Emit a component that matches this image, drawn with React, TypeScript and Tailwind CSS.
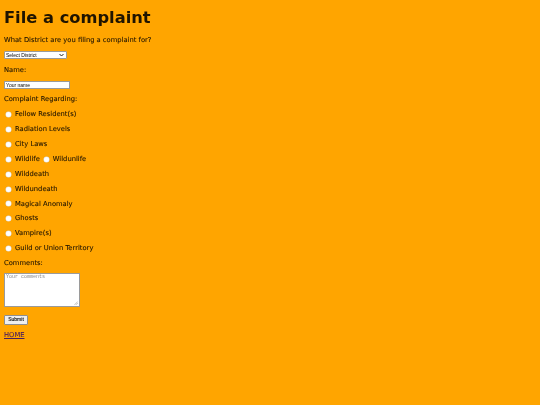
import React from 'react';

const topics = [
  'Fellow Resident(s)',
  'Radiation Levels',
  'City Laws',
  null,
  'Wilddeath',
  'Wildundeath',
  'Magical Anomaly',
  'Ghosts',
  'Vampire(s)',
  'Guild or Union Territory',
];

const Dot = () => (
  <span className="inline-block w-[5px] h-[5px] rounded-full bg-white shadow-[0_0_0_0.5px_#d8d8d8] mr-[4px] shrink-0" />
);

const Row: React.FC<{ children: React.ReactNode }> = ({ children }) => (
  <div className="h-[14.87px] flex items-center">{children}</div>
);

export default function App() {
  return (
    <div
      className="min-h-screen w-full bg-[#ffa500] text-[#1f1400] px-[4px] pt-[8px] will-change-transform"
      style={{ fontFamily: '"DejaVu Sans", Verdana, sans-serif' }}
    >
      <h1 className="text-[16.3px] font-bold leading-[20px] mb-[5px]">File a complaint</h1>

      {/* labels get a hairline stroke so the tiny type keeps some weight */}
      <div className="text-[6.75px] leading-none [-webkit-text-stroke:0.1px_#2a1a00]">
        <Row>What District are you filing a complaint for?</Row>
        <Row>
          <div
            className="w-[63px] h-[8px] bg-white border border-[#9a9a9a] rounded-[1px] flex items-center justify-between pl-[1px] pr-[2px] text-[5px] text-black [-webkit-text-stroke:0]"
            style={{ fontFamily: '"Liberation Sans", Arial, sans-serif' }}
          >
            <span>Select District</span>
            <svg width="5" height="4" viewBox="0 0 10 6" fill="none" stroke="#222" strokeWidth="2">
              <path d="M1 1l4 4 4-4" />
            </svg>
          </div>
        </Row>
        <Row>Name:</Row>
        <Row>
          <div
            className="w-[66px] h-[8px] bg-white border border-[#9a9a9a] flex items-center pl-[1px] text-[5px] text-black [-webkit-text-stroke:0]"
            style={{ fontFamily: '"Liberation Sans", Arial, sans-serif' }}
          >
            Your name
          </div>
        </Row>
        <Row>Complaint Regarding:</Row>
        {topics.map((t, i) =>
          t === null ? (
            <Row key={i}>
              <span className="pl-[2px] flex items-center">
                <Dot />
                <span>Wildlife</span>
                <span className="w-[4px]" />
                <Dot />
                <span>Wildunlife</span>
              </span>
            </Row>
          ) : (
            <Row key={i}>
              <span className="pl-[2px] flex items-center">
                <Dot />
                <span>{t}</span>
              </span>
            </Row>
          )
        )}
        <Row>Comments:</Row>

        <div className="relative mt-[2px] w-[76px] h-[34px] bg-white border border-[#9a9a9a] [-webkit-text-stroke:0]">
          <span
            className="absolute left-[1px] top-[1px] text-[5px] text-[#8a8a8a]"
            style={{ fontFamily: '"Liberation Mono", "Courier New", monospace' }}
          >
            Your comments
          </span>
          <svg className="absolute right-[1px] bottom-[1px]" width="4" height="4" viewBox="0 0 4 4" stroke="#999" strokeWidth="0.6">
            <path d="M0.5 3.8L3.8 0.5M2 3.8L3.8 2" />
          </svg>
        </div>

        <div className="mt-[8px]">
          <div
            className="w-[24px] h-[10px] bg-[#efefef] border border-[#8f8f8f] rounded-[1px] flex items-center justify-center text-[5px] text-black [-webkit-text-stroke:0.1px_#000]"
            style={{ fontFamily: '"Liberation Sans", Arial, sans-serif' }}
          >
            Submit
          </div>
        </div>

        <div className="mt-[7px]">
          <a href="#" className="text-[#4a1f5e] underline text-[6.75px] [-webkit-text-stroke:0.1px_#4a1f5e]">HOME</a>
        </div>
      </div>
    </div>
  );
}
